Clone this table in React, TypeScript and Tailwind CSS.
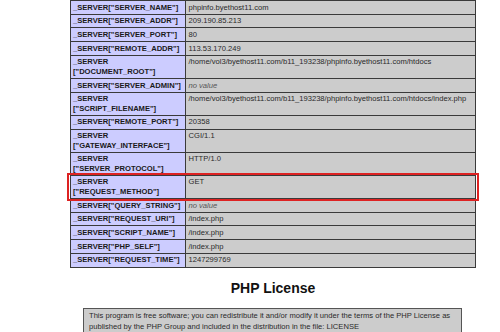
type Row = {
  label: string[]
  value: string
  empty?: boolean
  marked?: boolean
}

const rows: Row[] = [
  { label: ['_SERVER["SERVER_NAME"]'], value: 'phpinfo.byethost11.com' },
  { label: ['_SERVER["SERVER_ADDR"]'], value: '209.190.85.213' },
  { label: ['_SERVER["SERVER_PORT"]'], value: '80' },
  { label: ['_SERVER["REMOTE_ADDR"]'], value: '113.53.170.249' },
  { label: ['_SERVER', '["DOCUMENT_ROOT"]'], value: '/home/vol3/byethost11.com/b11_193238/phpinfo.byethost11.com/htdocs' },
  { label: ['_SERVER["SERVER_ADMIN"]'], value: 'no value', empty: true },
  { label: ['_SERVER', '["SCRIPT_FILENAME"]'], value: '/home/vol3/byethost11.com/b11_193238/phpinfo.byethost11.com/htdocs/index.php' },
  { label: ['_SERVER["REMOTE_PORT"]'], value: '20358' },
  { label: ['_SERVER', '["GATEWAY_INTERFACE"]'], value: 'CGI/1.1' },
  { label: ['_SERVER', '["SERVER_PROTOCOL"]'], value: 'HTTP/1.0' },
  { label: ['_SERVER', '["REQUEST_METHOD"]'], value: 'GET', marked: true },
  { label: ['_SERVER["QUERY_STRING"]'], value: 'no value', empty: true },
  { label: ['_SERVER["REQUEST_URI"]'], value: '/index.php' },
  { label: ['_SERVER["SCRIPT_NAME"]'], value: '/index.php' },
  { label: ['_SERVER["PHP_SELF"]'], value: '/index.php' },
  { label: ['_SERVER["REQUEST_TIME"]'], value: '1247299769' },
]

export default function App() {
  return (
    <div
      className="w-[500px] h-[332px] overflow-hidden bg-white"
      style={{ fontFamily: '"Liberation Sans", Arial, sans-serif' }}
    >
      <div className="ml-[70px] w-[406px] border border-[#3a3a3a]">
        {rows.map((r, i) => (
          <div key={i} className={'relative flex ' + (i > 0 ? 'border-t border-[#3a3a3a]' : '')}>
            <div className="w-[115px] shrink-0 border-r border-[#3a3a3a] bg-[#ccccff] px-[2px] py-[1.6px] text-[7.6px] leading-[9.5px] font-bold text-[#1a1a1a] whitespace-nowrap">
              {r.label.map((l, j) => (
                <div key={j}>{l}</div>
              ))}
            </div>
            <div
              className={
                'flex-1 bg-[#cccccc] pl-[2.5px] py-[1.6px] text-[7.6px] leading-[9.5px] whitespace-nowrap ' +
                (r.empty ? 'italic text-[#555555]' : 'text-[#2a2a2a]')
              }
            >
              {r.value}
            </div>
            {r.marked && (
              <div className="absolute z-10 left-[-4px] right-[-4px] top-[-2.5px] bottom-[-3px] border-2 border-[#dd2222]" />
            )}
          </div>
        ))}
      </div>

      <h2 className="ml-[70px] w-[406px] mt-[12px] text-center text-[14px] leading-[16px] font-bold text-[#111111]">
        PHP License
      </h2>

      <div className="ml-[83px] w-[379px] mt-[12px] border border-[#555555] bg-[#cccccc] px-[5px] pt-[1px] pb-[4px] text-[7.6px] leading-[11px] text-[#2a2a2a] whitespace-nowrap">
        <div>This program is free software; you can redistribute it and/or modify it under the terms of the PHP License as</div>
        <div>published by the PHP Group and included in the distribution in the file: LICENSE</div>
      </div>
    </div>
  )
}
